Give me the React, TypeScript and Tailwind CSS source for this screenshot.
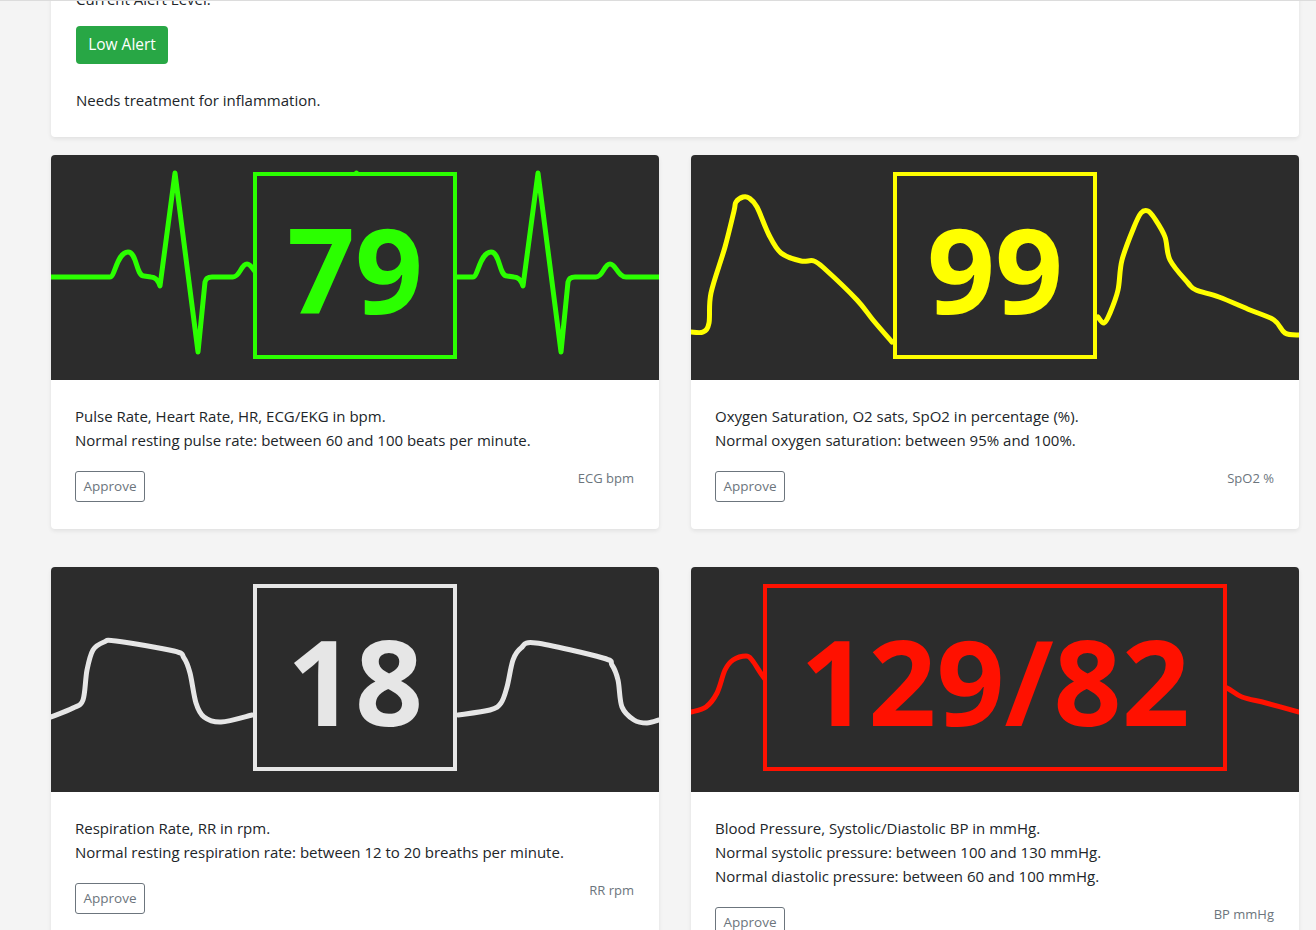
import React from 'react';

// smooth curve through points (catmull-rom -> cubic bezier)
const smooth = (pts: number[][]) => {
  let d = `M${pts[0][0]},${pts[0][1]}`;
  for (let i = 0; i < pts.length - 1; i++) {
    const p0 = pts[i - 1] || pts[i];
    const p1 = pts[i];
    const p2 = pts[i + 1];
    const p3 = pts[i + 2] || p2;
    const c1x = p1[0] + (p2[0] - p0[0]) / 6;
    const c1y = p1[1] + (p2[1] - p0[1]) / 6;
    const c2x = p2[0] - (p3[0] - p1[0]) / 6;
    const c2y = p2[1] - (p3[1] - p1[1]) / 6;
    d += ` C${c1x.toFixed(1)},${c1y.toFixed(1)} ${c2x.toFixed(1)},${c2y.toFixed(1)} ${p2[0]},${p2[1]}`;
  }
  return d;
};

const beat = (X: number) =>
  `L${X - 65},122 C${X - 60},122 ${X - 58},97 ${X - 47},97 C${X - 38},97 ${X - 39},121 ${X - 31},121 L${X - 24},122 Q${X - 18},122 ${X - 15},131 L${X},18 L${X + 23},197 L${X + 30},127 Q${X + 31},122 ${X + 37},122 L${X + 58},122 C${X + 65},122 ${X + 66},109 ${X + 72},109 C${X + 78},109 ${X + 80},122 ${X + 88},122`;

const ecgPath = `M0,122 ${beat(124)} ${beat(305.5)} ${beat(487)} L608,122`;

const spo2Path =
  smooth([[0, 177], [12, 177], [18, 168], [20, 138], [34, 92], [43, 56], [45, 47], [52, 42], [58, 43], [66, 52], [78, 80], [90, 98], [110, 106], [123, 106], [135, 115], [166, 145], [182, 165], [201, 187]]) +
  ' ' +
  smooth([[407, 162], [413, 168], [419, 158], [427, 135], [431, 105], [443, 72], [450, 58], [457, 56], [464, 64], [474, 82], [479, 105], [497, 128], [505, 135], [528, 142], [559, 155], [583, 165], [594, 178], [608, 180]]);

const rrPath =
  smooth([[0, 150], [22, 141], [32, 133], [36, 103], [42, 83], [53, 75], [65, 74], [123, 84], [133, 91], [139, 106], [145, 136], [153, 150], [170, 155], [201, 148]]) +
  ' ' +
  smooth([[407, 148], [439, 143], [450, 136], [456, 120], [462, 93], [470, 81], [485, 76], [552, 91], [561, 98], [567, 113], [571, 140], [583, 153], [596, 156], [608, 153]]);

const bpPath =
  smooth([[0, 145], [15, 140], [26, 126], [34, 103], [42, 93], [55, 89], [61, 93], [71, 108], [80, 120]]) +
  ' ' +
  smooth([[520, 115], [536, 121], [551, 130], [575, 136], [608, 145]]);

const vitals = [
  {
    id: 'ecg',
    value: '79',
    stroke: '#2bff00',
    box: 'w-[204px] border-[#2bff00] text-[#2bff00]',
    wave: ecgPath,
    lines: ['Pulse Rate, Heart Rate, HR, ECG/EKG in bpm.', 'Normal resting pulse rate: between 60 and 100 beats per minute.'],
    label: 'ECG bpm'
  },
  {
    id: 'spo2',
    value: '99',
    stroke: '#ffff00',
    box: 'w-[204px] border-[#ffff00] text-[#ffff00]',
    wave: spo2Path,
    lines: ['Oxygen Saturation, O2 sats, SpO2 in percentage (%).', 'Normal oxygen saturation: between 95% and 100%.'],
    label: 'SpO2 %'
  },
  {
    id: 'rr',
    value: '18',
    stroke: '#e6e6e6',
    box: 'w-[204px] border-[#e6e6e6] text-[#e6e6e6]',
    wave: rrPath,
    lines: ['Respiration Rate, RR in rpm.', 'Normal resting respiration rate: between 12 to 20 breaths per minute.'],
    label: 'RR rpm'
  },
  {
    id: 'bp',
    value: '129/82',
    stroke: '#ff1100',
    box: 'w-[464px] border-[#ff1100] text-[#ff1100]',
    wave: bpPath,
    lines: ['Blood Pressure, Systolic/Diastolic BP in mmHg.', 'Normal systolic pressure: between 100 and 130 mmHg.', 'Normal diastolic pressure: between 60 and 100 mmHg.'],
    label: 'BP mmHg'
  }
];

const App: React.FC = () => {
  return (
    <div className="h-[930px] overflow-hidden bg-[#f4f4f4] font-['Open_Sans',sans-serif] text-[#212529]">
      <div className="h-px bg-[#dcdcdc]" />
      <div className="overflow-hidden">
        <div className="ml-[51px] w-[1248px]">
          <section className="-mt-[39px] bg-white rounded-b-[4px] shadow-[0_2px_4px_rgba(0,0,0,0.08)] pt-[25px] px-[25px] pb-[25px]">
            <p className="text-[15px] leading-[24px]">Current Alert Level.</p>
            <button className="mt-[15px] h-[38px] w-[92px] rounded-[4px] bg-[#28a745] text-white text-[15.5px]">
              Low Alert
            </button>
            <p className="mt-[24px] text-[15px] leading-[24px]">Needs treatment for inflammation.</p>
          </section>

          <div className="mt-[18px] grid grid-cols-2 gap-x-[32px] gap-y-[38px] items-start">
            {vitals.map((v) => (
              <div key={v.id} className="bg-white rounded-[4px] shadow-[0_2px_4px_rgba(0,0,0,0.08)]">
                <div className="relative h-[225px] bg-[#2c2c2c] rounded-t-[4px] overflow-hidden flex justify-center pt-[17px]">
                  <svg className="absolute inset-0" width="608" height="225" viewBox="0 0 608 225">
                    <path d={v.wave} fill="none" stroke={v.stroke} strokeWidth="5" strokeLinecap="round" strokeLinejoin="round" />
                  </svg>
                  <div className={`relative h-[187px] border-4 bg-[#2c2c2c] flex items-center justify-center pt-[6px] ${v.box}`}>
                    <span className="font-['Open_Sans',sans-serif] font-bold text-[119px] leading-none">{v.value}</span>
                  </div>
                </div>
                <div className="pt-[24px] px-[24px] pb-[27px]">
                  {v.lines.map((line) => (
                    <p key={line} className="text-[15px] leading-[24px]">
                      {line}
                    </p>
                  ))}
                  <div className="mt-[19px] flex justify-between items-start">
                    <button className="h-[31px] w-[70px] border border-[#6c757d] rounded-[3px] text-[#6c757d] text-[13.5px]">
                      Approve
                    </button>
                    <span className="-mt-[2px] mr-px text-[13px] leading-[19px] text-[#6c757d]">{v.label}</span>
                  </div>
                </div>
              </div>
            ))}
          </div>
        </div>
      </div>
    </div>
  );
};

export default App;
